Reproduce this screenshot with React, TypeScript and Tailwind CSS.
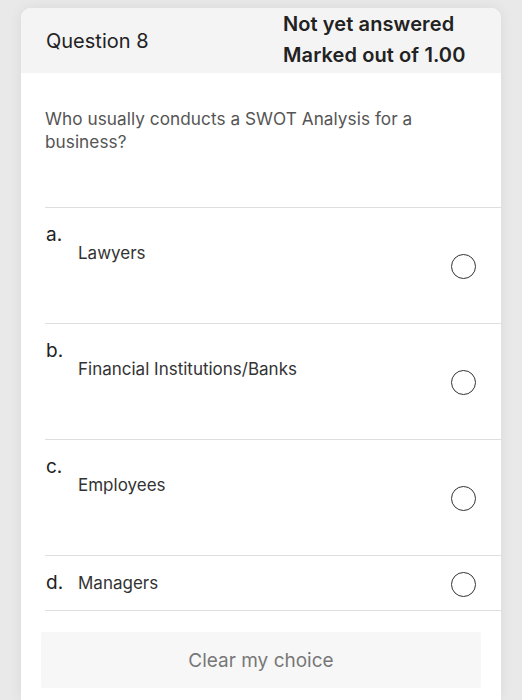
const options = [
  { letter: "a.", text: "Lawyers" },
  { letter: "b.", text: "Financial Institutions/Banks" },
  { letter: "c.", text: "Employees" },
];

const Radio = () => (
  <div className="w-[25px] h-[25px] rounded-full border-[1.5px] border-[#333] bg-white shrink-0" />
);

const App = () => {
  return (
    <div
      className="min-h-[700px] w-full bg-[#e9e9e9] pt-2 overflow-hidden"
      style={{ fontFamily: "Inter, 'Noto Sans', sans-serif" }}
    >
      <div className="ml-[21px] w-[480px] h-[692px] bg-white rounded-t-[10px] shadow-[0_0_14px_rgba(0,0,0,0.07)] flex flex-col">
        <header className="flex flex-row items-center h-[65px] bg-[#f4f4f4] rounded-t-[10px] pl-[25px]">
          <div className="w-[237px] text-[20px] text-[#222]">Question 8</div>
          <div className="flex flex-col text-[20px] font-semibold text-[#222] leading-[31px] tracking-[0.1px] -mt-[1px]">
            <span>Not yet answered</span>
            <span>Marked out of 1.00</span>
          </div>
        </header>

        <div className="pl-[24px]">
          <p className="pt-[34px] pr-[70px] text-[17.2px] leading-[23px] text-[#555] tracking-[0.05px] h-[134px]">
            Who usually conducts a SWOT Analysis for a business?
          </p>

          {options.map((o) => (
            <div key={o.letter} className="flex flex-row items-start h-[116px] border-t border-[#dedede]">
              <div className="w-[33px] pl-[1px] pt-[15px] text-[19px] leading-[24px] text-[#222]">{o.letter}</div>
              <div className="pt-[34px] text-[17px] leading-[22px] text-[#333]">{o.text}</div>
              <div className="ml-auto mr-[25px] mt-[46px]">
                <Radio />
              </div>
            </div>
          ))}

          <div className="flex flex-row items-center h-[56px] border-y border-[#dedede]">
            <div className="w-[33px] pl-[1px] text-[19px] leading-[24px] text-[#222]">d.</div>
            <div className="text-[17px] leading-[22px] text-[#333]">Managers</div>
            <div className="ml-auto mr-[25px] mt-[2px]">
              <Radio />
            </div>
          </div>
        </div>

        <div className="px-[20px] pt-[21px]">
          <button className="w-full h-[56px] pt-[3px] bg-[#f7f7f7] rounded-[2px] text-[19px] text-[#777]">
            Clear my choice
          </button>
        </div>
      </div>
    </div>
  );
};

export default App;
